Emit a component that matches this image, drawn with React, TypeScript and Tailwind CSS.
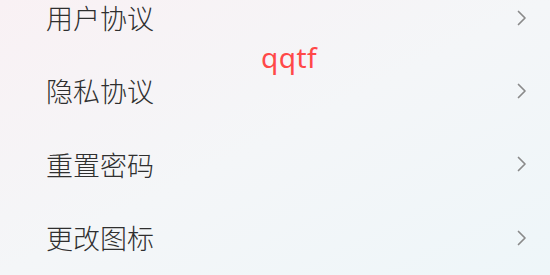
const items = ['用户协议', '隐私协议', '重置密码', '更改图标']

function Chevron() {
  return (
    <svg width="12" height="16" viewBox="0 0 12 16" fill="none" className="shrink-0">
      <path d="M2.5 1.5 L9 8 L2.5 14.5" stroke="#8a8a8a" strokeWidth="1.7" strokeLinecap="round" strokeLinejoin="round" />
    </svg>
  )
}

export default function App() {
  return (
    <div
      className="relative h-[275px] w-[550px] overflow-hidden bg-linear-to-br from-[#f9f1f4] via-[#f4f6f8] to-[#eef6f9]"
      style={{ fontFamily: '"Noto Sans CJK SC", "Noto Sans", sans-serif' }}
    >
      <div className="flex flex-col gap-[46.4px] pt-[4px]">
        {items.map((label) => (
          <div key={label} className="flex h-[27px] items-center justify-between pl-[46px] pr-[22px]">
            <span className="text-[27px] leading-none font-light text-[#2f2f2f]">{label}</span>
            <Chevron />
          </div>
        ))}
      </div>

      <span
        className="absolute top-[43px] left-[261px] text-[28px] leading-none tracking-[0.5px] text-[#ff4848]"
        style={{ fontFamily: '"Noto Sans", sans-serif' }}
      >
        qqtf
      </span>
    </div>
  )
}
